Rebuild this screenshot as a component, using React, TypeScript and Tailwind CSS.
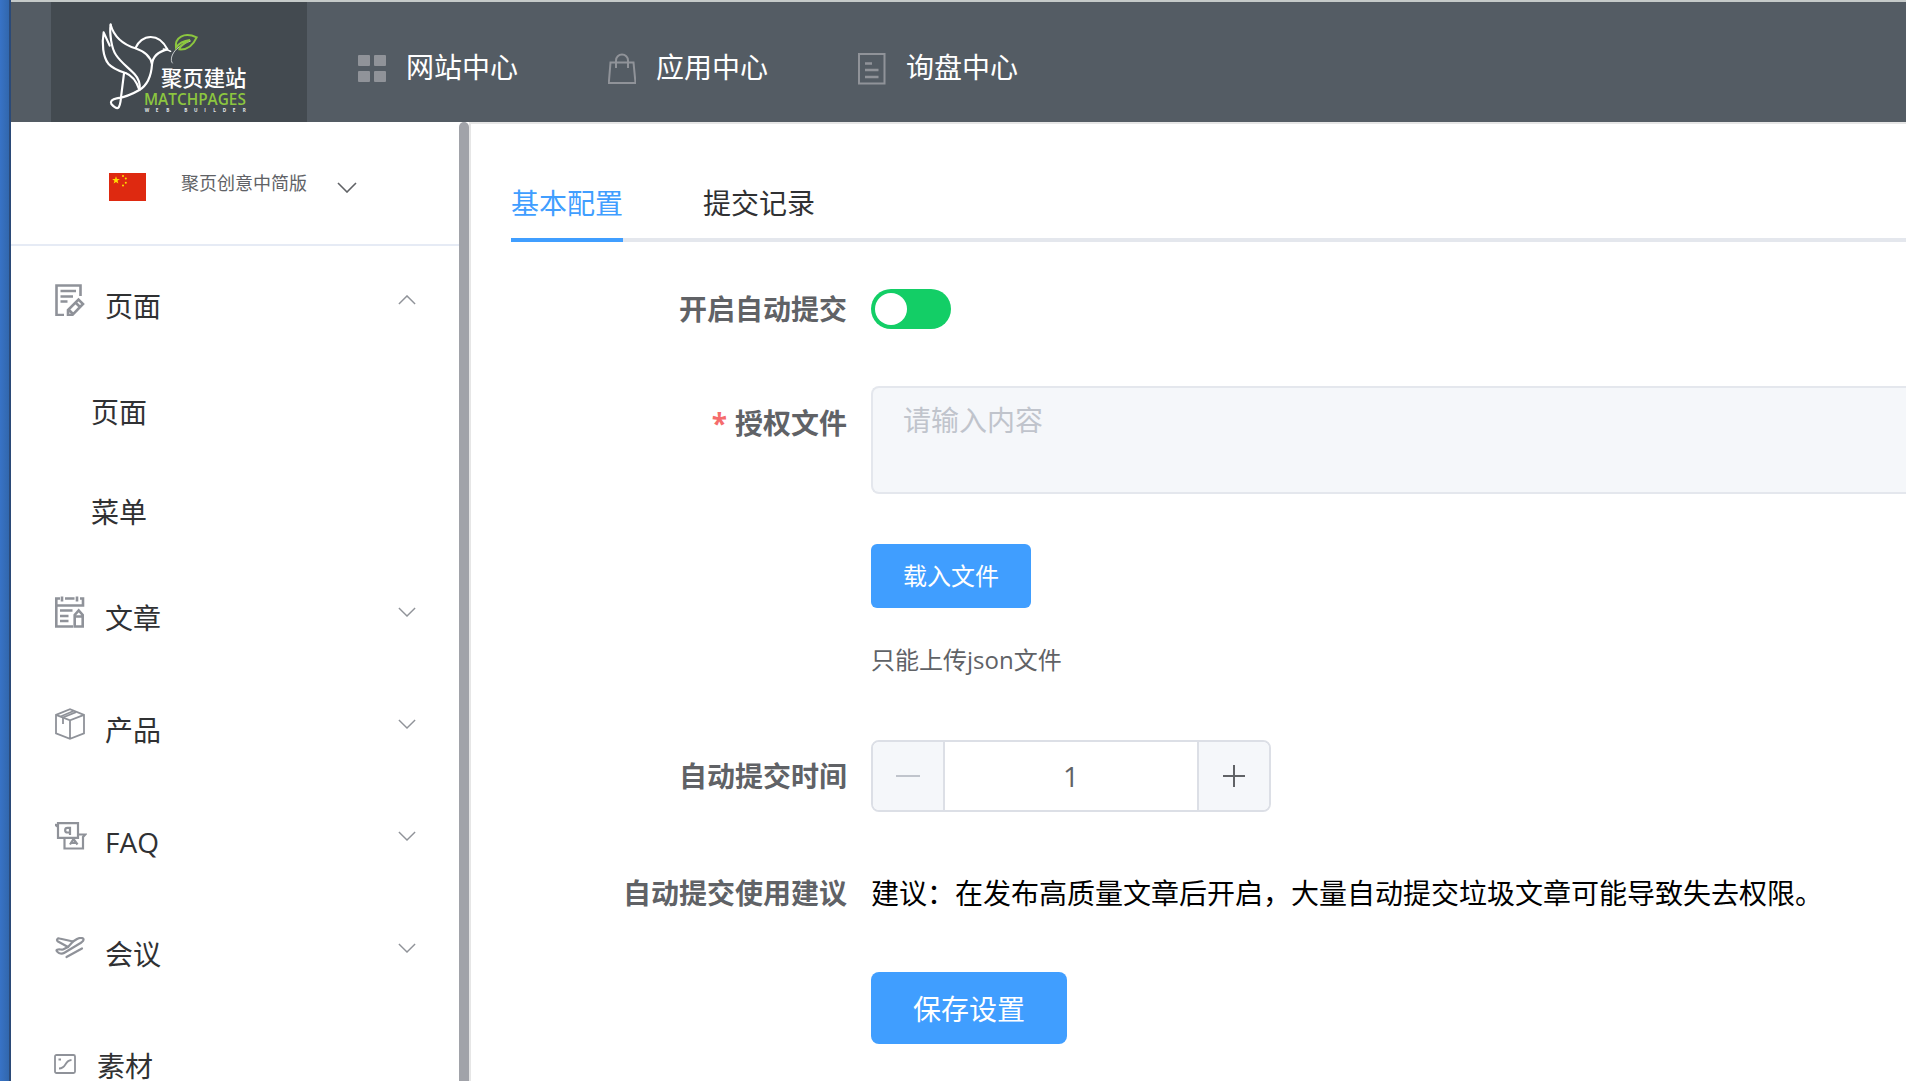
import React, { useState } from "react";

type IconProps = { className?: string };

const GridIcon = () => (
  <svg width="28" height="28" viewBox="0 0 28 28" fill="#909399">
    <rect x="0" y="0" width="12" height="11" rx="1" />
    <rect x="16" y="0" width="12" height="11" rx="1" />
    <rect x="0" y="16" width="12" height="11" rx="1" />
    <rect x="16" y="16" width="12" height="11" rx="1" />
  </svg>
);

const BagIcon = () => (
  <svg width="28" height="32" viewBox="0 0 28 32" fill="none" stroke="#909399" strokeWidth="2">
    <path d="M2.500 9.500h23l2 20.500H.8z" />
    <path d="M8 15V7.500a6 6 0 0 1 12 0V15" />
  </svg>
);

const DocIcon = () => (
  <svg width="28" height="32" viewBox="0 0 28 32" fill="none" stroke="#909399" strokeWidth="2">
    <path d="M1 1h25.500v29.500H1z" />
    <path d="M7 10.500h7M7 17h13.500M7 24h13.500" strokeWidth="2.500" />
  </svg>
);

const PageIcon = () => (
  <svg width="30" height="32" viewBox="0 0 30 32" fill="none" stroke="#8f9299" strokeWidth="2.600">
    <path d="M25.500 12V1.500h-24V31H9" />
    <path d="M5.500 7H21M5.500 12.500H18M5.500 17.500h7" />
    <path d="M13 31v-5l10.500-10.500 4.500 4.500-10.500 10.800zM20.500 18.500l4.500 4.500M13.500 25.500l4.500 4.500" />
  </svg>
);

const ArticleIcon = () => (
  <svg width="30" height="32" viewBox="0 0 30 32" fill="none" stroke="#8f9299" strokeWidth="2.600">
    <path d="M5 2.500H1.300V30.500H18M1 9.500h27V2.500H25M10 2.500h9.500" />
    <path d="M7 .5v5M22 .5v5" />
    <path d="M5 14.500h12.500M5 20h8.500M5 25h8.500" />
    <path d="M19.700 30.500V19l4-4.500 4 4.500v11.500zM19.700 20.500h8" />
  </svg>
);

const BoxIcon = () => (
  <svg width="30" height="32" viewBox="0 0 30 32" fill="none" stroke="#8f9299" strokeWidth="1.800">
    <path d="M1 6.800 15 1.200l14 5.600v18.500L15 30.800 1 25.300zM1 6.800l14 5.500 14-5.500M15 12.300v18.500" />
    <path d="M8 16V9.500l13-5.300M5.500 8.500 18.500 3" />
  </svg>
);

const FaqIcon = () => (
  <svg width="32" height="28" viewBox="1 0 32 28" fill="none" stroke="#8f9299" strokeWidth="2.200">
    <path d="M4 15.800V5L1.500 3 4 3.200V1.200h20v14.600z" />
    <path d="M24 12.500h7.300L29 15v11.500H10.500v-10.500" />
    <path d="M16 13V5.800h-2.500a2.300 2.300 0 0 0 0 4.700H16M16 22.500 19.500 17l4 5.500M17.500 20.800h5" />
  </svg>
);

const PlaneIcon = () => (
  <svg width="30" height="22" viewBox="0 0 30 22" fill="none" stroke="#8f9299" strokeWidth="2.200" strokeLinecap="round" strokeLinejoin="round">
    <path d="m13 10-10-5.500C1 3 2.500 1 4.500 1.500L18 4.500l4-2.500c3-1.800 7-1.200 6.500 1 0 1-1.500 2-2.500 2.800L9 16c-2 1.200-3.500.7-5 0-2.500-1.300-3.500-3-1-3.500 2-.3 3.500.3 5 0z" />
    <path d="M11.500 20 27 11.500M13 10l5-5.500" />
  </svg>
);

const ImageIcon = () => (
  <svg width="22" height="20" viewBox="0 0 22 20" fill="none" stroke="#8f9299" strokeWidth="1.800">
    <rect x="1" y="1" width="20" height="18" rx="1.500" />
    <path d="M5 14.500c8 0 5-8 12.500-8.500" />
    <path d="M4.500 5.500h2.500" strokeWidth="2" />
  </svg>
);

const Chevron = ({ className }: IconProps) => (
  <svg className={className} viewBox="0 0 20 11" fill="none" stroke="currentColor" strokeWidth="1.600">
    <path d="m1 1 9 9 9-9" />
  </svg>
);

const Flag = () => (
  <svg width="37" height="28" viewBox="0 0 37 28">
    <rect width="37" height="28" fill="#de2910" />
    <g fill="#ffde00">
      <path d="m7 3.200 1 2.800h2.900L8.500 7.700l.9 2.900L7 8.900l-2.400 1.700.9-2.900L3.100 6H6z" />
      <circle cx="14" cy="3" r="1" />
      <circle cx="16.800" cy="5.500" r="1" />
      <circle cx="16.800" cy="9.800" r="1" />
      <circle cx="14" cy="12.500" r="1" />
    </g>
  </svg>
);

const Logo = () => (
  <svg width="148" height="94" viewBox="300 60 444 282" fill="none" role="img" aria-label="聚页建站 MATCHPAGES">
    <g stroke="#fff" strokeWidth="6.500" strokeLinejoin="round" strokeLinecap="round">
      <path d="M332 70c-4 26 2 72 16 92 16 24 40 40 56 58 11 12 17 28 15 46" />
      <path d="M332 72c10 34 36 58 74 70 30 10 46 26 50 48 2-22 18-38 46-45-12-24-28-37-50-37-20 0-38 14-46 34" />
      <path d="M329 134 311 94c-6 34-2 74 14 94 14 16 34 22 52 28 20 8 32 24 40 48" />
      <path d="M456 190c-2 30-10 60-38 77-22 13-44 22-68 25-14 2-20 10-16 17 6 7 14 13 20 12 8-6 8-24 10-40l8-64" />
      <path d="M490 144q12 1 22 7" strokeWidth="4" />
    </g>
    <path d="M518 187c-8-8-4-28 12-43 14-12 28-20 42-24" stroke="#c8ccce" strokeWidth="3" />
    <path d="M528 140c-4-30 24-48 62-31-10 22-28 38-52 36 2-12 14-18 32-28-18 2-32 8-42 23z" stroke="#8cc63f" strokeWidth="6" />
    <text x="483" y="256" fontSize="64" fontWeight="500" fill="#fff">聚页建站</text>
    <text x="432" y="312" fontSize="46" fontWeight="600" fill="#8cc63f">MATCHPAGES</text>
    <text x="434 467 499 553 582 613 640 668 698 728" y="334" fontSize="14" fontWeight="700" fill="#e5e7e8">WEBBUILDER</text>
  </svg>
);

const navItems = [
  { label: "网站中心", icon: <GridIcon /> },
  { label: "应用中心", icon: <BagIcon /> },
  { label: "询盘中心", icon: <DocIcon /> },
];

const menuItems = [
  { label: "页面", icon: <PageIcon />, children: ["页面", "菜单"] },
  { label: "文章", icon: <ArticleIcon />, children: [] },
  { label: "产品", icon: <BoxIcon />, children: [] },
  { label: "FAQ", icon: <FaqIcon />, children: [] },
  { label: "会议", icon: <PlaneIcon />, children: [] },
];

const Header = () => (
  <header className="flex h-[122px] shrink-0 border-t-2 border-[#c5cac9] bg-[#545c64]">
    <a href="#" className="ml-10 flex w-64 shrink-0 items-center bg-[#434a50] pl-[49px] pt-3">
      <Logo />
    </a>
    <nav className="ml-[51px] flex items-center pt-[10px] text-[28px] leading-10 text-white">
      {navItems.map((item) => (
        <a key={item.label} href="#" className="flex w-[250px] items-center">
          <span className="flex w-12 shrink-0 pt-1">{item.icon}</span>
          {item.label}
        </a>
      ))}
    </nav>
  </header>
);

const Sidebar = () => {
  const [open, setOpen] = useState("页面");

  return (
    <aside className="flex w-[460px] shrink-0 border-r-2 border-[#e6e6e6]">
      <div className="min-w-0 flex-1 overflow-hidden">
        <button className="flex h-[124px] w-full items-center border-b-2 border-[#e6ebf5] pl-[98px] pt-2 text-[#606266]">
          <Flag />
          <span className="ml-[35px] pb-2 text-lg leading-7">聚页创意中简版</span>
          <Chevron className="ml-[30px] w-5" />
        </button>
        <ul className="pt-1 text-[28px] leading-10 text-[#303133]">
          {menuItems.map((item) => (
            <li key={item.label}>
              <button
                className="flex h-28 w-full items-center pb-3 pl-11 pr-[43px]"
                aria-expanded={open === item.label}
                onClick={() => setOpen(open === item.label ? "" : item.label)}
              >
                <span className="w-[50px] shrink-0">{item.icon}</span>
                <span className="flex-1 pt-3 text-left">{item.label}</span>
                <Chevron
                  className={
                    open === item.label
                      ? "w-[18px] rotate-180 text-[#909399]"
                      : "w-[18px] text-[#909399]"
                  }
                />
              </button>
              {open === item.label &&
                item.children.map((child) => (
                  <a key={child} href="#" className="flex h-[100px] items-center pl-20">
                    {child}
                  </a>
                ))}
            </li>
          ))}
          <li>
            <a href="#" className="flex h-28 items-center pl-[43px]">
              <span className="w-[43px] shrink-0 pb-1">
                <ImageIcon />
              </span>
              素材
            </a>
          </li>
        </ul>
      </div>
      <div className="w-[10px] shrink-0 rounded-t-full bg-[#a1a3a9]" />
    </aside>
  );
};

const labelClass = "w-[360px] shrink-0 pr-6 text-right font-bold text-[#606266]";

const SettingsForm = () => {
  const [auto, setAuto] = useState(false);
  const [time, setTime] = useState(1);

  return (
    <form className="text-[28px] leading-10" onSubmit={(e) => e.preventDefault()}>
      <div className="flex h-10">
        <label htmlFor="auto" className={labelClass}>开启自动提交</label>
        <input
          id="auto"
          type="checkbox"
          role="switch"
          checked={auto}
          onChange={(e) => setAuto(e.target.checked)}
          className="h-10 w-20 appearance-none rounded-full bg-[#13ce66] p-1 before:block before:size-8 before:rounded-full before:bg-white checked:before:ml-auto"
        />
      </div>

      <div className="mt-[57px] flex">
        <label htmlFor="file" className={labelClass + " pt-[17px]"}>
          <span className="mr-2 text-[#f56c6c]">*</span>授权文件
        </label>
        <textarea
          id="file"
          readOnly
          placeholder="请输入内容"
          className="h-[108px] min-w-0 flex-1 resize-none rounded-l-lg border-2 border-r-0 border-[#e4e7ed] bg-[#f5f7fa] px-[30px] py-3 placeholder:text-[#c0c4cc]"
        />
      </div>

      <div className="ml-[360px] mt-[50px] text-2xl leading-10">
        <button type="button" className="flex h-16 items-center rounded-md bg-[#409eff] px-8 text-white">
          载入文件
        </button>
        <p className="mt-8 text-[#606266]">只能上传json文件</p>
      </div>

      <div className="mt-[60px] flex items-center">
        <label htmlFor="time" className={labelClass}>自动提交时间</label>
        <div className="flex h-[72px] w-[400px] overflow-hidden rounded-lg border-2 border-[#dcdfe6]">
          <button
            type="button"
            aria-label="减少"
            onClick={() => setTime(Math.max(1, time - 1))}
            className="flex w-[72px] shrink-0 items-center justify-center border-r-2 border-[#dcdfe6] bg-[#f5f7fa]"
          >
            <svg width="24" height="24" stroke="#c0c4cc" strokeWidth="2">
              <path d="M0 12h24" />
            </svg>
          </button>
          <input
            id="time"
            type="text"
            value={time}
            onChange={(e) => setTime(Number(e.target.value) || 1)}
            className="min-w-0 flex-1 text-center text-[#606266]"
          />
          <button
            type="button"
            aria-label="增加"
            onClick={() => setTime(time + 1)}
            className="flex w-[72px] shrink-0 items-center justify-center border-l-2 border-[#dcdfe6] bg-[#f5f7fa]"
          >
            <svg width="24" height="24" stroke="#606266" strokeWidth="2">
              <path d="M1 12h22M12 1v22" />
            </svg>
          </button>
        </div>
      </div>

      <div className="mt-[61px] flex">
        <span className={labelClass}>自动提交使用建议</span>
        <p className="text-black">建议：在发布高质量文章后开启，大量自动提交垃圾文章可能导致失去权限。</p>
      </div>

      <button
        type="submit"
        className="ml-[360px] mt-[59px] flex h-[72px] items-center rounded-lg bg-[#409eff] px-[42px] pt-0.5 text-white"
      >
        保存设置
      </button>
    </form>
  );
};

const App = (): JSX.Element => {
  return (
    <div
      lang="zh-CN"
      className="flex h-screen overflow-hidden bg-white font-['Open_Sans','Noto_Sans_CJK_SC',sans-serif]"
    >
      <div className="w-[11px] shrink-0 border-r-2 border-[#2b4a78] bg-linear-to-r from-[#3873c6] to-[#3167ad]" />
      <div className="flex min-w-0 flex-1 flex-col">
        <Header />
        <div className="flex min-h-0 flex-1">
          <Sidebar />
          <main className="min-w-0 flex-1 overflow-hidden border-t-2 border-[#e6e6e6] pl-10 pt-[59px]">
            <div className="flex gap-20 border-b-4 border-[#e4e7ed] text-[28px] leading-10 text-[#303133]">
              <button className="-mb-1 border-b-4 border-[#409eff] pb-[15px] text-[#409eff]">
                基本配置
              </button>
              <button className="pb-[15px]">提交记录</button>
            </div>
            <div className="pt-[47px]">
              <SettingsForm />
            </div>
          </main>
        </div>
      </div>
    </div>
  );
};

export default App;
